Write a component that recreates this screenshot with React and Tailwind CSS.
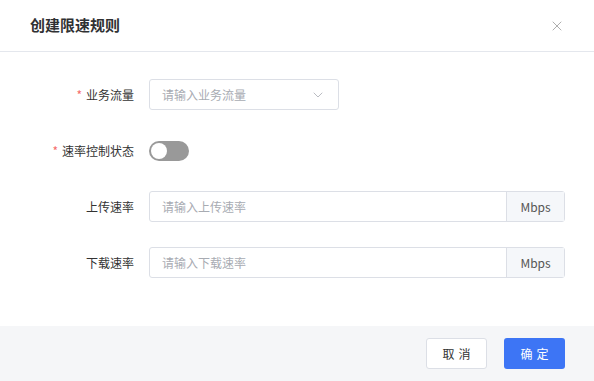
import { ChevronDown, X } from 'lucide-react';

function Label({ required, children }) {
  return (
    <div className="w-[149px] shrink-0 pr-[15px] text-right text-[12px] text-[#333]">
      {required && <span className="mr-1 text-[#f56c6c]">*</span>}
      {children}
    </div>
  );
}

function RateInput({ placeholder }) {
  return (
    <div className="flex h-[31px] w-[416px] rounded-[3px] border border-[#dcdfe6]">
      <div className="flex flex-1 items-center pl-[12px] text-[12px] text-[#a8abb2]">{placeholder}</div>
      <div className="flex w-[58px] items-center justify-center border-l border-[#dcdfe6] bg-[#f5f7fa] text-[12px] text-[#555]">
        Mbps
      </div>
    </div>
  );
}

export default function App() {
  return (
    <div className="flex h-[381px] w-[594px] flex-col bg-white" style={{ fontFamily: '"Noto Sans CJK SC", "Noto Sans", sans-serif' }}>
      <div className="flex h-[52px] items-center justify-between border-b border-[#e4e7ed] pl-[30px] pr-[29px]">
        <h1 className="text-[15px] font-semibold text-[#303133]">创建限速规则</h1>
        <X className="h-[16px] w-[16px] text-[#999]" strokeWidth={1.2} />
      </div>

      <div className="flex flex-1 flex-col gap-[25px] pt-[27px]">
        <div className="flex items-center">
          <Label required>业务流量</Label>
          <div className="flex h-[31px] w-[190px] items-center justify-between rounded-[3px] border border-[#dcdfe6] pl-[12px] pr-[12px]">
            <span className="text-[12px] text-[#a8abb2]">请输入业务流量</span>
            <ChevronDown className="h-[16px] w-[16px] text-[#a8abb2]" strokeWidth={1.2} />
          </div>
        </div>

        <div className="flex h-[31px] items-center">
          <Label required>速率控制状态</Label>
          <div className="flex h-[20px] w-[40px] items-center rounded-full bg-[#999] px-[2px]">
            <div className="h-[16px] w-[16px] rounded-full bg-white" />
          </div>
        </div>

        <div className="flex items-center">
          <Label>上传速率</Label>
          <RateInput placeholder="请输入上传速率" />
        </div>

        <div className="flex items-center">
          <Label>下载速率</Label>
          <RateInput placeholder="请输入下载速率" />
        </div>
      </div>

      <div className="flex h-[55px] items-center justify-end gap-[17px] bg-[#f5f6f8] pr-[29px]">
        <button className="h-[31px] w-[61px] rounded-[3px] border border-[#dcdfe6] bg-white pl-[4px] text-[12px] tracking-[4px] text-[#333]">取消</button>
        <button className="h-[31px] w-[61px] rounded-[3px] bg-[#3d75f5] pl-[4px] text-[12px] tracking-[4px] text-white">确定</button>
      </div>
    </div>
  );
}
